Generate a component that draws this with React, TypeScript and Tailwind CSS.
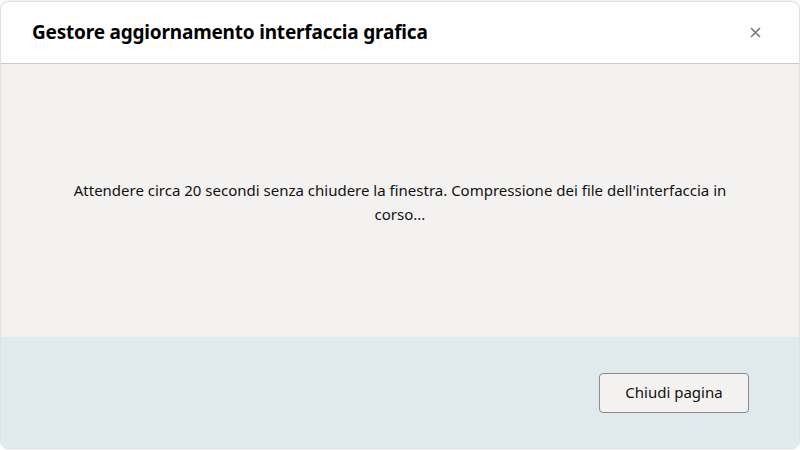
export default function App() {
  return (
    <div className="w-[800px] h-[450px] bg-white pt-[2px] px-[1px] pb-[2px] overflow-hidden" style={{ fontFamily: '"Noto Sans", "Open Sans", sans-serif' }}>
      <div className="h-full flex flex-col rounded-lg overflow-hidden shadow-[0_0_3px_rgba(0,0,0,0.35)]">
        {/* Header */}
        <div className="h-[62px] shrink-0 bg-white border-b border-[#c8c8c8] flex items-center justify-between pl-[31px] pr-[38px]">
          <h1 className="text-[19px] font-bold text-black tracking-[-0.2px]">Gestore aggiornamento interfaccia grafica</h1>
          <button className="text-[#777] text-[18px] leading-none">
            <svg width="11" height="11" viewBox="0 0 11 11">
              <path d="M1 1L10 10M10 1L1 10" stroke="#777" strokeWidth="1.6" />
            </svg>
          </button>
        </div>

        {/* Body */}
        <div className="h-[273px] shrink-0 bg-[#f3f2f1] flex items-center justify-center px-[60px] pt-[2px]">
          <p className="text-[15px] leading-[24px] text-[#111] text-center">
            Attendere circa 20 secondi senza chiudere la finestra. Compressione dei file dell'interfaccia in corso...
          </p>
        </div>

        {/* Footer */}
        <div className="flex-1 bg-[#dfe9ee] flex items-center justify-end pr-[50px]">
          <button className="w-[150px] h-[40px] rounded-[4px] border border-[#8a8a8a] bg-[#f3f2f1] text-[15px] text-[#111]">
            Chiudi pagina
          </button>
        </div>
      </div>
    </div>
  );
}
